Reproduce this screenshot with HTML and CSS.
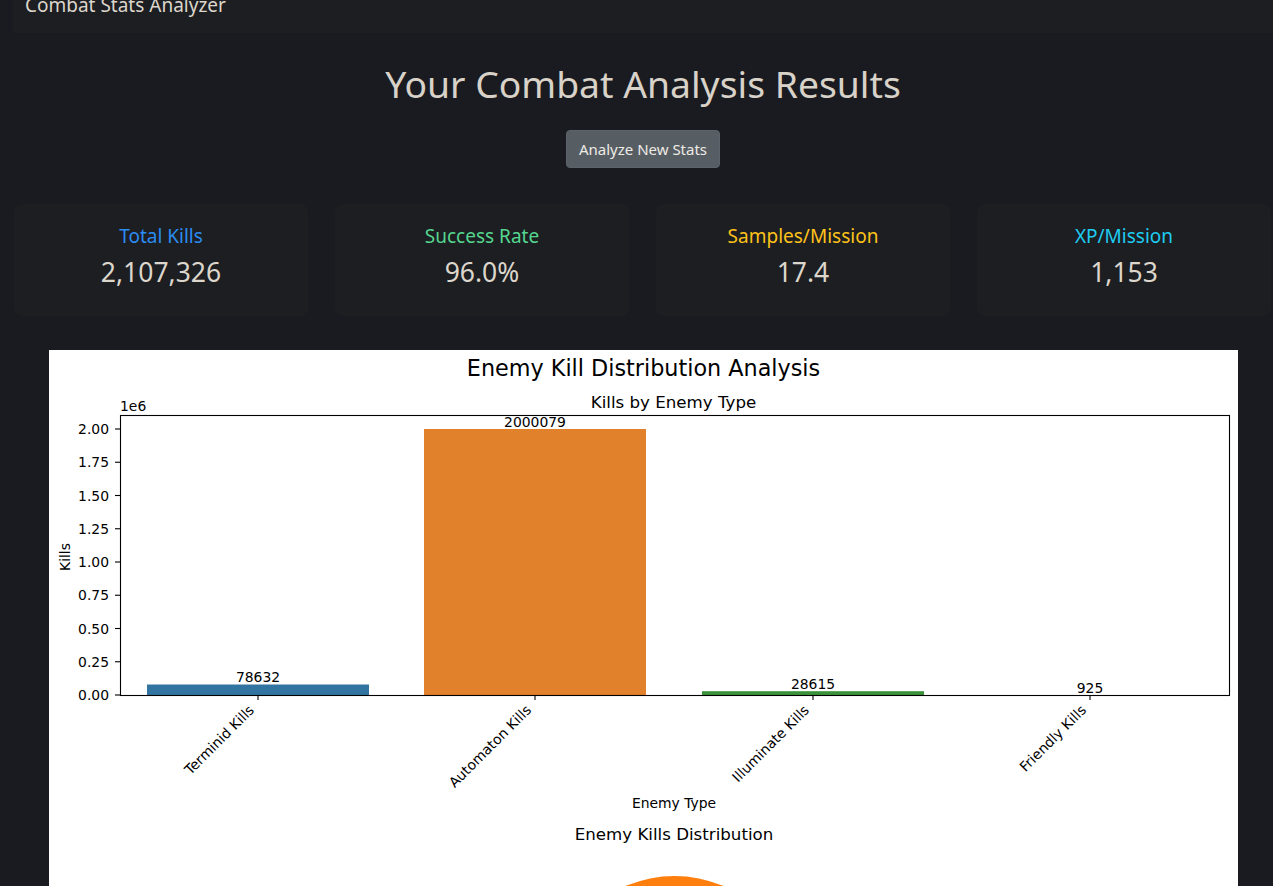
FILE: index.html
```html
<!DOCTYPE html>
<html lang="en">
<head>
<meta charset="utf-8">
<title>Combat Stats Analyzer</title>
<link rel="stylesheet" href="styles.css">
</head>
<body>
<div class="page">
<nav class="navbar"><span class="brand">Combat Stats Analyzer</span></nav>
<main class="results">
  <h1 class="page-title">Your Combat Analysis Results</h1>
  <div class="actions"><button class="btn-secondary" type="button">Analyze New Stats</button></div>
  <section class="stats">
    <div class="stat-card"><div class="stat-label label-blue">Total Kills</div><div class="stat-value">2,107,326</div></div>
    <div class="stat-card"><div class="stat-label label-green">Success Rate</div><div class="stat-value">96.0%</div></div>
    <div class="stat-card"><div class="stat-label label-yellow">Samples/Mission</div><div class="stat-value">17.4</div></div>
    <div class="stat-card"><div class="stat-label label-cyan">XP/Mission</div><div class="stat-value">1,153</div></div>
  </section>
  <figure class="chart">
    <svg class="chart-svg" width="1189" height="560" viewBox="0 0 1189 560" xmlns="http://www.w3.org/2000/svg">
      <text class="t-sup" x="594.5" y="26" text-anchor="middle">Enemy Kill Distribution Analysis</text>
      <text class="t-title" x="624.5" y="58" text-anchor="middle">Kills by Enemy Type</text>
      <text class="t-tick" x="71" y="61">1e6</text>
      <!-- bars -->
      <rect x="98" y="334.5" width="222" height="10.5" fill="#3274a1"/>
      <rect x="375" y="79" width="222" height="266" fill="#e1812c"/>
      <rect x="653" y="341.2" width="222" height="3.8" fill="#3a923a"/>
      <!-- axes frame -->
      <rect x="71.5" y="65.5" width="1109" height="280" fill="none" stroke="#000" stroke-width="1.1"/>
      <!-- ticks -->
      <g stroke="#000" stroke-width="1.1">
        <line x1="66" y1="345" x2="71" y2="345"/>
        <line x1="66" y1="311.75" x2="71" y2="311.75"/>
        <line x1="66" y1="278.5" x2="71" y2="278.5"/>
        <line x1="66" y1="245.25" x2="71" y2="245.25"/>
        <line x1="66" y1="212" x2="71" y2="212"/>
        <line x1="66" y1="178.75" x2="71" y2="178.75"/>
        <line x1="66" y1="145.5" x2="71" y2="145.5"/>
        <line x1="66" y1="112.25" x2="71" y2="112.25"/>
        <line x1="66" y1="79" x2="71" y2="79"/>
        <line x1="209" y1="345" x2="209" y2="350"/>
        <line x1="486" y1="345" x2="486" y2="350"/>
        <line x1="764" y1="345" x2="764" y2="350"/>
        <line x1="1041" y1="345" x2="1041" y2="350"/>
      </g>
      <g class="t-tick" text-anchor="end">
        <text x="60" y="350">0.00</text>
        <text x="60" y="316.75">0.25</text>
        <text x="60" y="283.5">0.50</text>
        <text x="60" y="250.25">0.75</text>
        <text x="60" y="217">1.00</text>
        <text x="60" y="183.75">1.25</text>
        <text x="60" y="150.5">1.50</text>
        <text x="60" y="117.25">1.75</text>
        <text x="60" y="84">2.00</text>
      </g>
      <text class="t-tick" x="16" y="207" text-anchor="middle" transform="rotate(-90 16 207)" dy="5">Kills</text>
      <!-- bar value labels -->
      <g class="t-tick" text-anchor="middle">
        <text x="209" y="332">78632</text>
        <text x="486" y="77">2000079</text>
        <text x="764" y="339">28615</text>
        <text x="1041" y="343">925</text>
      </g>
      <!-- x tick labels -->
      <g class="t-tick" text-anchor="end">
        <text x="206" y="361" transform="rotate(-45 206 361)">Terminid Kills</text>
        <text x="483" y="361" transform="rotate(-45 483 361)">Automaton Kills</text>
        <text x="761" y="361" transform="rotate(-45 761 361)">Illuminate Kills</text>
        <text x="1038" y="361" transform="rotate(-45 1038 361)">Friendly Kills</text>
      </g>
      <text class="t-tick" x="625" y="458" text-anchor="middle">Enemy Type</text>
      <text class="t-title" x="625" y="490" text-anchor="middle">Enemy Kills Distribution</text>
      <circle cx="625.5" cy="651" r="125" fill="#ff7f0e"/>
    </svg>
  </figure>
</main>
</div>
</body>
</html>
```

FILE: styles.css
```css
html, body {
  margin: 0;
  padding: 0;
}
body {
  background: #1a1b20;
  color: #dcd6cc;
  font-family: "Noto Sans", "Open Sans", sans-serif;
  overflow: hidden;
}
.page {
  margin-left: 13px;
}
.navbar {
  height: 33px;
  background: #1c1e21;
  padding-left: 12px;
  overflow: hidden;
}
.brand {
  display: block;
  font-size: 19px;
  line-height: 20px;
  margin-top: -5px;
  color: #dcd6cc;
}
.results {
  display: flex;
  flex-direction: column;
  align-items: center;
}
.page-title {
  margin: 27px 0 0 0;
  font-size: 37.3px;
  font-weight: 400;
  line-height: 48px;
  color: #d8d2c8;
  text-align: center;
  width: 100%;
}
.actions {
  margin-top: 22px;
}
.btn-secondary {
  font-family: inherit;
  font-size: 15px;
  line-height: 24px;
  padding: 6px 12px;
  color: #eeeae4;
  background: #565e64;
  border: 1px solid #5c636a;
  border-radius: 4px;
}
.stats {
  align-self: flex-start;
  margin: 36px 0 0 1px;
  display: grid;
  grid-template-columns: repeat(4, 294px);
  gap: 27px;
}
.stat-card {
  height: 112px;
  box-sizing: border-box;
  padding-bottom: 7px;
  background: #1c1e21;
  border-radius: 8px;
  display: flex;
  flex-direction: column;
  align-items: center;
  justify-content: center;
}
.stat-label {
  font-size: 19px;
  line-height: 24px;
}
.stat-value {
  font-size: 26.5px;
  line-height: 34px;
  margin-top: 7px;
  color: #dcd6cc;
}
.label-blue { color: #2b8cf2; }
.label-green { color: #55d68f; }
.label-yellow { color: #ffc21a; }
.label-cyan { color: #1ecbf1; }
.chart {
  margin: 34px 0 0 0;
  width: 1189px;
  background: #ffffff;
  overflow: hidden;
}
.chart-svg {
  display: block;
}
.t-sup {
  font-family: "DejaVu Sans", sans-serif;
  font-size: 22.3px;
  fill: #000;
}
.t-title {
  font-family: "DejaVu Sans", sans-serif;
  font-size: 16.67px;
  fill: #000;
}
.t-tick {
  font-family: "DejaVu Sans", sans-serif;
  font-size: 13.9px;
  fill: #000;
}
```
